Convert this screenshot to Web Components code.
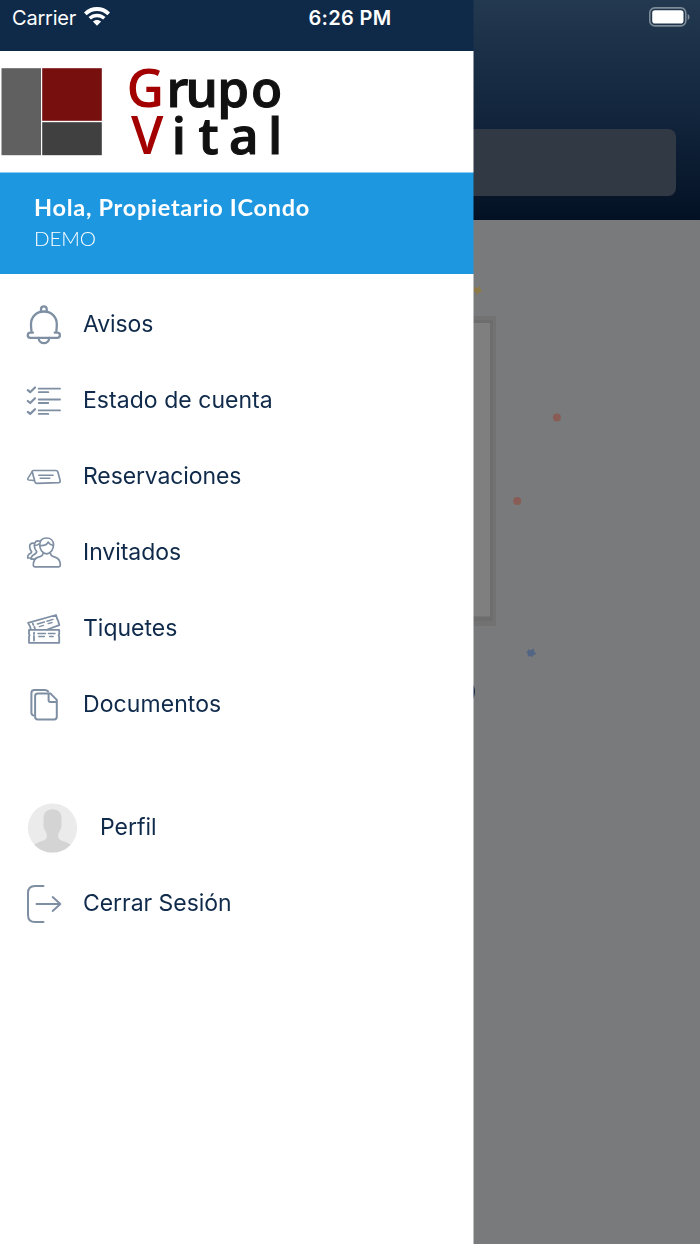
<!DOCTYPE html>
<html lang="es">
<head>
<meta charset="utf-8">
<meta name="viewport" content="width=device-width, initial-scale=1">
<title>ICondo</title>
<style>
  body {
    margin: 0;
    background: #797a7b;
    font-family: Inter, "Liberation Sans", sans-serif;
  }
</style>
</head>
<body>
<condo-screen>
  <home-backdrop slot="page"></home-backdrop>
  <side-drawer slot="drawer">
    <brand-logo></brand-logo>
    <user-banner name="Hola, Propietario ICondo">DEMO</user-banner>
    <menu-list>
      <menu-item icon="bell" track="-0.1">Avisos</menu-item>
      <menu-item icon="checks" track="0.04">Estado de cuenta</menu-item>
      <menu-item icon="sign" track="-0.12">Reservaciones</menu-item>
      <menu-item icon="guests" track="-0.05">Invitados</menu-item>
      <menu-item icon="tickets" track="0">Tiquetes</menu-item>
      <menu-item icon="docs" track="0.08">Documentos</menu-item>
    </menu-list>
    <menu-list class="account">
      <menu-item icon="avatar" track="-0.02">Perfil</menu-item>
      <menu-item icon="logout" track="-0.05">Cerrar Sesión</menu-item>
    </menu-list>
  </side-drawer>
  <status-bar slot="status" time="6:26 PM">Carrier</status-bar>
</condo-screen>

<script>
const ICONS = {
  bell: `<svg width="34" height="40" viewBox="0 0 34 40" stroke-width="2.3">
    <path d="M14 6.6V4.3a2.8 2.8 0 0 1 5.7 0v2.3"/>
    <path d="M6 27.6H3.4a2.6 2.6 0 0 0 0 5.2h26.9a2.6 2.6 0 0 0 0-5.2h-2.6M3.6 27.6c1.6 0 .4-2.6.4-8.4C4 11.8 9.4 6.500 16.900 6.500S29.800 11.800 29.800 19.200c0 5.800-1.200 8.400.4 8.400"/>
    <path d="M11.600 33c.4 6.700 10.200 6.700 10.600 0"/>
  </svg>`,
  checks: `<svg width="34" height="30" viewBox="0 0 34 30" stroke-width="1.800">
    <path d="M.8 4.200 3.200 6.200 8 1.500M.8 15 3.200 17 8 12.300M.8 25.900 3.200 27.900 8 23.200" stroke-width="2.200"/>
    <path d="M11.700 2.700h21.300M11.700 6.200h9.600M11.700 13.500h21.300M11.700 17h9.600M11.700 24.400h21.300M11.700 27.900h9.600"/>
  </svg>`,
  sign: `<svg width="34" height="16" viewBox="0 0 34 16" stroke-width="1.700">
    <path d="M6.300 1.500h22.500q1.600 0 2.100 1.500l2.200 8.400q.4 2.100-1.400 2.300L10 14.400q-1.600 0-2.100-1.600L5.300 3Q5 1.500 6.300 1.500Z"/>
    <path d="M5.300 2.400.9 9.300q-.7 1.300.8 1.600l5.400.7M11.800 6.300h14.300M13.200 9.300h9.600" stroke-width="1.500"/>
  </svg>`,
  guests: `<svg width="34" height="31" viewBox="0 0 34 31" stroke-width="1.700">
    <path d="M12.700 7.700C12.700 3.200 15.600 1 19.600 1s6.900 2.500 6.900 6.800c0 4.600-2.800 9-6.900 9s-6.900-4.500-6.900-9.100Z"/>
    <path d="M13 8.500c2.800.2 6.800-.5 8.200-3.400 1.300 2.300 2.800 3 5.200 3.400"/>
    <path d="M15.800 16.800c.1 2.100-1.700 2.700-4.500 3.300-3.900 1-5 3.500-5 8.200 0 1.200.4 1.500 1.500 1.500h24c1.200 0 1.500-.4 1.500-1.500 0-4.700-1.400-7.200-5.300-8.200-2.800-.6-4.400-1.200-4.300-3.300"/>
    <path d="M13.200 4.200C9.900 3 7 4.600 7.300 9c.2 2.500 1 4 2.300 5.400.4 2-1.700 2.700-3.400 3.600-1.200.8-1.900 2-2.200 4M7.500 6.300C4.500 5.500 2.200 7 2.700 10.400c.2 2 1 3.200 1.900 4.200.3 1.500-1.400 1.900-2.600 2.600-1 .6-1.400 2-1.300 3.800M4 22.100h4M.7 21h3M7.800 8.400c1.400 0 2.800-.2 3.700-1.200"/>
  </svg>`,
  tickets: `<svg width="34" height="30" viewBox="0 0 34 30" stroke-width="1.800">
    <path d="M2 15.900h30.200v4.300l-.6 1.200.6 1.200v6.200H2v-6.200l.6-1.200-.6-1.200Z"/>
    <path d="M3.900 15.500 3 12.400l-.8-1.500L1.100 8.900 29 1l1.200 4 .9 1.700 1.200 4.400-12 4.400"/>
    <path d="M7 18.700v1.300M7 22v4.500M5.800 9.500l.6 1.500M7.300 12.900l.6 1.500"/>
    <path d="M10.400 10l7-2M12.400 12.600l4-1.200M20 7.200l6-1.800M21.200 9.600l3.800-1.100M11 19.500h7.500M11.800 22.500h5.500M21.500 19.500h6.500M22.700 22.500h3.500" stroke-width="1.500"/>
  </svg>`,
  docs: `<svg width="34" height="32" viewBox="0 0 34 32" stroke-width="2">
    <path d="M6.300 26.500Q4.400 26 4.400 23.600V4q0-3 3-3h10.400q2 0 3.400 1.500"/>
    <path d="M10.800 4.600h12.800l6.200 6.300v16.900q0 2.700-2.700 2.700H10.800q-2.700 0-2.700-2.700V7.300q0-2.700 2.700-2.700ZM21.600 5v6.500q0 1.400 1.400 1.400h6.700"/>
  </svg>`,
  avatar: `<svg width="50" height="50" viewBox="0 0 50 50" stroke="none">
    <defs><clipPath id="round"><circle cx="25.500" cy="25" r="24.600"/></clipPath></defs>
    <circle cx="25.500" cy="25" r="24.600" fill="#ebebeb"/>
    <path clip-path="url(#round)" fill="#d4d4d4" d="M25.500 6.200c6 0 9 3.500 9 9.300 0 1.500-.2 3 0 4.500.4 3-.5 6-2 8.300-1.600 2.700-1.800 5.700-.6 7.400 1.800 2.600 7.800 2.500 12.600 6.500V50H6.500v-7.800c4.800-4 10.800-3.900 12.600-6.500 1.200-1.700 1-4.700-.6-7.400-1.500-2.300-2.400-5.300-2-8.300.2-1.500 0-3 0-4.500 0-5.800 3-9.300 9-9.300Z"/>
  </svg>`,
  logout: `<svg width="36" height="38" viewBox="0 0 36 38" stroke-width="2">
    <path d="M16.500 1H8Q1 1 1 8V30q0 7 7 7h8.500M9.500 19h23.500M25.700 12.100l7.600 6.900-7.600 6.900"/>
  </svg>`
};

class CondoScreen extends HTMLElement {
  constructor() {
    super();
    this.attachShadow({ mode: 'open' }).innerHTML = `
      <style>
        :host {
          display: block;
          position: relative;
          height: 1244px;
          overflow: hidden;
        }
        #drawer, #status {
          position: absolute;
          top: 0;
          left: 0;
        }
        #drawer { height: 100%; }
        #status { width: 100%; }
      </style>
      <slot name="page"></slot>
      <div id="drawer"><slot name="drawer"></slot></div>
      <div id="status"><slot name="status"></slot></div>
    `;
  }
}

class StatusBar extends HTMLElement {
  constructor() {
    super();
    this.attachShadow({ mode: 'open' }).innerHTML = `
      <style>
        :host {
          display: grid;
          grid-template-columns: 1fr auto 1fr;
          align-items: center;
          box-sizing: border-box;
          height: 36px;
          padding: 0 10px 0 12px;
          color: #fff;
          font-size: 20px;
        }
        .carrier {
          display: flex;
          align-items: center;
          gap: 7.500px;
          letter-spacing: -.2px;
        }
        .time {
          font-weight: 600;
          letter-spacing: .32px;
          padding-right: 2px;
        }
        .battery { justify-self: end; }
        svg { display: block; margin-top: -3px; }
      </style>
      <div class="carrier">
        <slot></slot>
        <svg width="26" height="19" viewBox="0 0 26 19" fill="none" stroke="#fff">
          <path d="M1.300 6.800C8 .4 18 .4 24.700 6.800" stroke-width="3.800"/>
          <path d="M5.700 11.300c4.200-3.900 10.400-3.900 14.600 0" stroke-width="3.500"/>
          <path d="M13 18.700 8.900 14.600c2.300-2.200 5.900-2.200 8.200 0Z" fill="#fff" stroke="none"/>
        </svg>
      </div>
      <div class="time"></div>
      <svg class="battery" width="41" height="20" viewBox="0 0 41 20">
        <rect x=".8" y=".9" width="36" height="18" rx="5" fill="none" stroke="#fff" stroke-opacity=".42" stroke-width="1.600"/>
        <rect x="3.200" y="3.200" width="31.300" height="13.400" rx="2.800" fill="#fff"/>
        <path d="M38.700 6.900c2.300.8 2.300 5.200 0 6Z" fill="#fff" fill-opacity=".45"/>
      </svg>
    `;
  }

  connectedCallback() {
    this.shadowRoot.querySelector('.time').textContent = this.getAttribute('time');
  }
}

class SideDrawer extends HTMLElement {
  constructor() {
    super();
    this.attachShadow({ mode: 'open' }).innerHTML = `
      <style>
        :host {
          display: flex;
          flex-direction: column;
          width: 474px;
          height: 1244px;
          background: #fff;
          /* the last column is half transparent: the drawer ends on a half pixel */
          -webkit-mask-image: linear-gradient(to right, #000 473px, rgba(0, 0, 0, .5) 473px);
          mask-image: linear-gradient(to right, #000 473px, rgba(0, 0, 0, .5) 473px);
        }
        .top {
          height: 51px;
          flex: none;
          background: #0f2a48;
        }
        ::slotted(.account) { margin-top: 34px; }
      </style>
      <div class="top"></div>
      <slot></slot>
    `;
  }
}

class BrandLogo extends HTMLElement {
  constructor() {
    super();
    this.attachShadow({ mode: 'open' }).innerHTML = `
      <style>
        :host {
          display: block;
          height: 122px;
        }
        svg { display: block; }
        text {
          font-family: "Open Sans", "Noto Sans", sans-serif;
          font-size: 51px;
          font-weight: 600;
          fill: #111;
          stroke: #111;
          stroke-width: 1.100px;
        }
        .initial {
          fill: #a30000;
          stroke: none;
          font-size: 52px;
        }
      </style>
      <svg width="300" height="121" viewBox="0 0 300 121">
        <rect x="1.500" y="17.200" width="39.500" height="87" fill="#606060"/>
        <rect x="42.200" y="17.200" width="59.600" height="52.600" fill="#780f0f"/>
        <rect x="42.200" y="71.200" width="59.600" height="33" fill="#404040"/>
        <text y="55.500" x="126.500 166.500 185.500 217.200 251"><tspan class="initial">G</tspan>rupo</text>
        <text y="102.800" x="131 171.800 198.500 229 268"><tspan class="initial">V</tspan>ital</text>
      </svg>
    `;
  }
}

class UserBanner extends HTMLElement {
  constructor() {
    super();
    this.attachShadow({ mode: 'open' }).innerHTML = `
      <style>
        :host {
          display: block;
          box-sizing: border-box;
          height: 100.500px;
          padding: 19px 34px 0;
          background: #1e97e1;
          box-shadow: 0 -1px #8ecbf0;
          color: #fff;
          font-family: Lato, sans-serif;
        }
        .name {
          font-size: 23.500px;
          line-height: 31px;
          font-weight: 700;
          letter-spacing: .72px;
        }
        .unit {
          font-size: 20.500px;
          line-height: 30px;
          font-weight: 300;
          letter-spacing: -.1px;
        }
      </style>
      <div class="name"></div>
      <div class="unit"><slot></slot></div>
    `;
  }

  connectedCallback() {
    this.shadowRoot.querySelector('.name').textContent = this.getAttribute('name');
  }
}

class MenuList extends HTMLElement {
  constructor() {
    super();
    this.attachShadow({ mode: 'open' }).innerHTML = `
      <style>
        :host {
          display: flex;
          flex-direction: column;
          padding-top: 13px;
        }
      </style>
      <slot></slot>
    `;
  }
}

class MenuItem extends HTMLElement {
  constructor() {
    super();
    this.attachShadow({ mode: 'open' }).innerHTML = `
      <style>
        :host {
          display: flex;
          align-items: center;
          height: 76px;
          padding-left: 27px;
          color: #0f2a4a;
          font-size: 23px;
        }
        .icon {
          width: 56px;
          flex: none;
        }
        :host([icon="avatar"]) .icon { width: 73px; }
        span { padding-bottom: 1px; }
        svg {
          display: block;
          overflow: visible;
          fill: none;
          stroke: #7f8fa3;
          stroke-linecap: round;
          stroke-linejoin: round;
        }
        :host([icon="avatar"]) svg { stroke: none; }
      </style>
      <div class="icon"></div>
      <span><slot></slot></span>
    `;
  }

  connectedCallback() {
    this.shadowRoot.querySelector('.icon').innerHTML = ICONS[this.getAttribute('icon')];
    this.shadowRoot.querySelector('span').style.letterSpacing = this.getAttribute('track') + 'px';
  }
}

// dimmed home page that stays visible to the right of the drawer
class HomeBackdrop extends HTMLElement {
  constructor() {
    super();
    this.attachShadow({ mode: 'open' }).innerHTML = `
      <style>
        :host {
          display: block;
          height: 1244px;
          background: #797a7b;
        }
        header {
          box-sizing: border-box;
          height: 220px;
          padding: 128.500px 24px 0;
          background: linear-gradient(#23394f, #1a2f46 27%, #11243b 55%, #041124);
        }
        .search {
          height: 67.500px;
          border-radius: 8px;
          background: #303944;
        }
        svg { display: block; }
      </style>
      <header><div class="search"></div></header>
      <svg width="700" height="1024" viewBox="0 220 700 1024">
        <path d="M200 316h296v310H200Z" fill="#727272"/>
        <path d="M200 320h293v301H200Z" fill="#6d6d6d"/>
        <path d="M200 323h290v293.500H200Z" fill="#7f7f7f"/>
        <path d="M473.500 287l3.500 1 3-2 .6 3.600 1.600 2.200-3.200.8-2.200 2.600-1-3-3-1.300 1.700-1.500Z" fill="#8c7946"/>
        <circle cx="556.900" cy="417.400" r="4" fill="#895c56"/>
        <circle cx="517.200" cy="501" r="4" fill="#895c56"/>
        <path d="M528.200 649.200l2.600 1 3-1.800.5 3.500 2.300 1.900-2.900 1-1.500 2.200-2.400-.9-2 .6-.1-3-1.400-2 1.800-.6Z" fill="#526584"/>
        <circle cx="461.500" cy="691.500" r="13.500" fill="#192a42"/>
      </svg>
    `;
  }
}

window.customElements.define('condo-screen', CondoScreen);
window.customElements.define('status-bar', StatusBar);
window.customElements.define('side-drawer', SideDrawer);
window.customElements.define('brand-logo', BrandLogo);
window.customElements.define('user-banner', UserBanner);
window.customElements.define('menu-list', MenuList);
window.customElements.define('menu-item', MenuItem);
window.customElements.define('home-backdrop', HomeBackdrop);
</script>
</body>
</html>
